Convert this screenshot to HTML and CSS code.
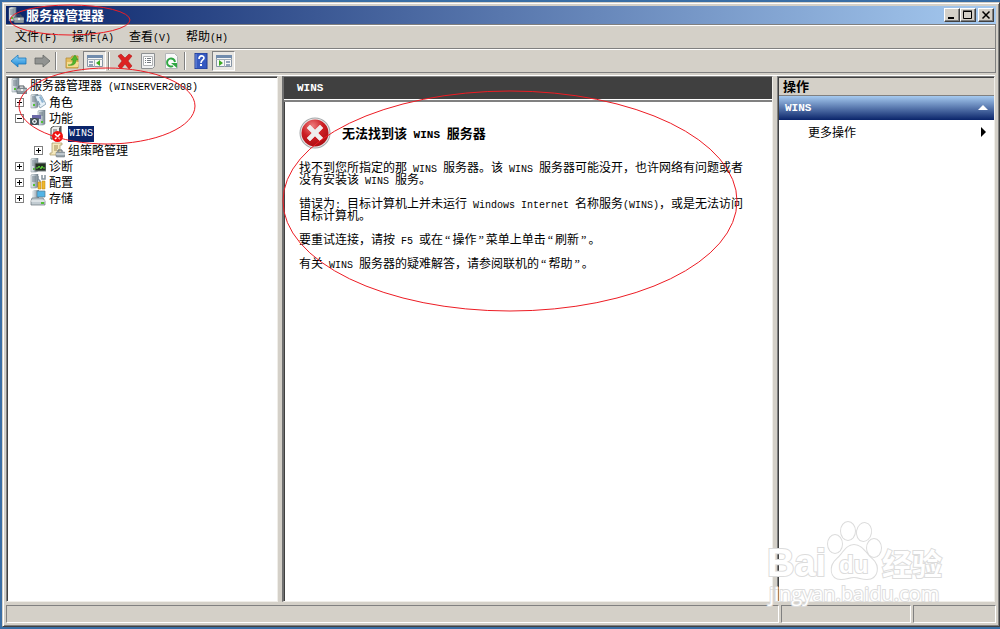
FILE: index.html
```html
<!DOCTYPE html>
<html lang="zh-CN">
<head>
  <meta charset="UTF-8">
  <meta name="viewport" content="width=device-width, initial-scale=1.0">
  <title>服务器管理器</title>
  <link rel="stylesheet" href="styles.css">
</head>
<body>
  <!-- shared icons -->
  <svg class="defs" aria-hidden="true">
    <defs>
      <linearGradient id="steel" x1="0" x2="1" y1="0" y2="0">
        <stop offset="0" stop-color="#eef2f4"/>
        <stop offset="0.5" stop-color="#b4c0c8"/>
        <stop offset="1" stop-color="#73828c"/>
      </linearGradient>
      <radialGradient id="red" cx="0.4" cy="0.25" r="0.8">
        <stop offset="0" stop-color="#ee8080"/>
        <stop offset="0.5" stop-color="#cc1f24"/>
        <stop offset="1" stop-color="#a80c12"/>
      </radialGradient>
      <linearGradient id="blue" x1="0" x2="0" y1="0" y2="1">
        <stop offset="0" stop-color="#8fd4fa"/>
        <stop offset="1" stop-color="#1784d4"/>
      </linearGradient>
      <symbol id="tower" viewBox="0 0 16 16">
        <path d="M1 1l2-1h5v13l-2 1H1z" fill="url(#steel)" stroke="#7b8890" stroke-width="0.5"/>
        <path d="M2 3h4M2 5h4M2 7h4" stroke="#5f6e78" stroke-width="0.8"/>
        <rect x="3" y="10" width="2" height="2" fill="#52c234"/>
      </symbol>
      <symbol id="server" viewBox="0 0 16 16">
        <use href="#tower" width="16" height="16"/>
        <path d="M8 10V8h5v2" fill="none" stroke="#4c555b"/>
        <rect x="6" y="10" width="10" height="6" rx="1" fill="#8e999f" stroke="#525d64" stroke-width="0.6"/>
        <path d="M6 12h10" stroke="#dce3e6" stroke-width="0.8"/>
        <rect x="10" y="11" width="2" height="2" fill="#eee"/>
      </symbol>
    </defs>
  </svg>

  <div class="window">
    <header class="titlebar">
      <svg class="icon" viewBox="0 0 16 16"><use href="#server"/></svg>
      <h1>服务器管理器</h1>
      <div class="controls">
        <button aria-label="最小化"><svg viewBox="0 0 14 12"><path d="M3 9h6" stroke="#000" stroke-width="2"/></svg></button>
        <button aria-label="最大化"><svg viewBox="0 0 14 12"><path d="M2.500 2.500h8v7h-8zM2 2h9" fill="none" stroke="#000"/></svg></button>
        <button class="close" aria-label="关闭"><svg viewBox="0 0 14 12"><path d="M3.500 2.500l7 7M10.500 2.500l-7 7" stroke="#000" stroke-width="1.500"/></svg></button>
      </div>
    </header>

    <nav class="menubar">
      <button>文件<span class="en">(F)</span></button>
      <button>操作<span class="en">(A)</span></button>
      <button>查看<span class="en">(V)</span></button>
      <button>帮助<span class="en">(H)</span></button>
    </nav>

    <div class="toolbar">
      <button aria-label="后退"><svg viewBox="0 0 16 16"><path d="M0 8l7-6v3h8v6H7v3z" fill="url(#blue)" stroke="#1976ba" stroke-width="0.8"/></svg></button>
      <button aria-label="前进"><svg viewBox="0 0 16 16"><path d="M16 8L9 2v3H1v6h8v3z" fill="#919391" stroke="#666866" stroke-width="0.8"/></svg></button>
      <span class="sep"></span>
      <button aria-label="上移一级"><svg viewBox="0 0 16 16"><path d="M2 15V5h5l1-2h6v12z" fill="#e4bd5e" stroke="#b48c35" stroke-width="0.8"/><path d="M3 14V9h12l-1 5z" fill="#f5dc91"/><path d="M4 12c4 0 5-2 5-5H7l4-5 3 5h-2c0 5-4 6-8 5z" fill="#50b52d" stroke="#348d1c" stroke-width="0.5"/></svg></button>
      <button class="pressed" aria-label="显示控制台树"><svg viewBox="0 0 18 16"><path d="M1.500 2.500h15v11h-15z" fill="#f7f7f7" stroke="#8795a5"/><path d="M1 2h16v3H1z" fill="#718cad"/><path d="M8.500 6v8M1 6.500h16" stroke="#a4aeb7"/><path d="M3 9h4M3 12h4" stroke="#7288a5" stroke-width="1.500"/><path d="M14 7v6l-4-3z" fill="#3baa22"/></svg></button>
      <span class="sep"></span>
      <button aria-label="删除"><svg viewBox="0 0 16 16"><path d="M1 3l3-2 4 4 4-4 3 2-4 5 4 5-3 3-4-5-4 5-3-3 4-5z" fill="#dd2222" stroke="#a50e0e" stroke-width="0.5"/></svg></button>
      <button aria-label="属性"><svg viewBox="0 0 16 16"><path d="M1.500 0.500h13v13l-2 2h-11z" fill="#f0f1f1" stroke="#8e9193"/><path d="M3.500 3.500h9v9h-9z" fill="#fff" stroke="#b0b2b4"/><path d="M5 5.500h1M7 5.500h4M5 7.500h1M7 7.500h4M5 9.500h1M7 9.500h4" stroke="#757b81"/></svg></button>
      <button aria-label="刷新"><svg viewBox="0 0 16 16"><path d="M2.500 0.500h9l3 3v12h-12z" fill="#fafafa" stroke="#b4b6b8"/><path d="M12 9a4 4 0 1 0-2 4" fill="none" stroke="#2fa641" stroke-width="2"/><path d="M8 10h6v5z" fill="#2fa641"/></svg></button>
      <span class="sep"></span>
      <button aria-label="帮助主题"><svg viewBox="0 0 16 16"><path d="M2 0h12v16H2z" fill="#365ac1" stroke="#213b90"/><path d="M3 1v14" stroke="#7591df"/><path d="M6 6c0-4 5-4 5-1 0 2-3 2-3 5" fill="none" stroke="#fff" stroke-width="1.600"/><rect x="7" y="11" width="2" height="2" fill="#fff"/></svg></button>
      <button class="pressed" aria-label="显示操作窗格"><svg viewBox="0 0 18 16"><path d="M1.500 2.500h15v11h-15z" fill="#f7f7f7" stroke="#8795a5"/><path d="M1 2h16v3H1z" fill="#718cad"/><path d="M9.500 6v8M1 6.500h16" stroke="#a4aeb7"/><path d="M11 9h4M11 12h4" stroke="#7288a5" stroke-width="1.500"/><path d="M4 7v6l4-3z" fill="#3baa22"/></svg></button>
    </div>

    <main class="panes">
      <!-- console tree -->
      <section class="tree" aria-label="控制台树">
        <ul>
          <li class="row root"><svg class="icon" viewBox="0 0 16 16"><use href="#server"/></svg><span class="label">服务器管理器<span class="en"> (WINSERVER2008)</span></span></li>
          <li class="row">
            <button class="toggle" aria-label="展开角色"><svg viewBox="0 0 7 7"><path d="M1 3.500h5M3.500 1v5" stroke="#000"/></svg></button>
            <svg class="icon" viewBox="0 0 16 16"><use href="#tower"/><path d="M5 2l6-1 5 9-6 4z" fill="#e6f1f8" stroke="#6d8ba0" stroke-width="0.7"/><path d="M9 3l2-1 3 6-2 1z" fill="#8fb5d2"/><path d="M8 7l2 4" stroke="#6d8ba0"/></svg>
            <span class="label">角色</span>
          </li>
          <li class="row">
            <button class="toggle" aria-label="折叠功能"><svg viewBox="0 0 7 7"><path d="M1 3.500h5" stroke="#000"/></svg></button>
            <svg class="icon" viewBox="0 0 16 16"><path d="M8 1l2-1h5v14l-2 1H8z" fill="url(#steel)" stroke="#7b8890" stroke-width="0.5"/><path d="M9 3h4M9 5h4" stroke="#5f6e78" stroke-width="0.8"/><rect x="11" y="11" width="2" height="2" fill="#52c234"/><path d="M2 5h9v4H2z" fill="#6c69a8"/><path d="M0 8h9v7H0z" fill="#56646d"/><circle cx="4.500" cy="11.500" r="3" fill="#dce5ea" stroke="#20272c"/><circle cx="4.500" cy="11.500" r="1" fill="#39444b"/></svg>
            <span class="label">功能</span>
          </li>
          <li class="row child leaf">
            <svg class="icon" viewBox="0 0 16 16"><path d="M2 2l3-2h7v13H2z" fill="#eee" stroke="#444"/><path d="M10 2l2-2v13h-2z" fill="#555"/><path d="M4 4h4M4 6h4" stroke="#666"/><circle cx="8.500" cy="10.500" r="5.500" fill="#f01010"/><path d="M6 8l5 5M11 8l-5 5" stroke="#fff" stroke-width="1.600"/></svg>
            <span class="label selected en">WINS</span>
          </li>
          <li class="row child">
            <button class="toggle" aria-label="展开组策略管理"><svg viewBox="0 0 7 7"><path d="M1 3.500h5M3.500 1v5" stroke="#000"/></svg></button>
            <svg class="icon" viewBox="0 0 16 16"><path d="M3 1h10v2h-2v10H1v-2h2z" fill="#f6e9bd" stroke="#a59563" stroke-width="0.7"/><path d="M5 4h4M5 6h4M5 8h3" stroke="#a08b55"/><path d="M9 10V8h4v2" fill="none" stroke="#59636a"/><rect x="7" y="10" width="9" height="5" rx="1" fill="#98a4ab" stroke="#606b72" stroke-width="0.5"/><path d="M7 12h9" stroke="#e6ecef"/></svg>
            <span class="label">组策略管理</span>
          </li>
          <li class="row">
            <button class="toggle" aria-label="展开诊断"><svg viewBox="0 0 7 7"><path d="M1 3.500h5M3.500 1v5" stroke="#000"/></svg></button>
            <svg class="icon" viewBox="0 0 16 16"><use href="#tower"/><rect x="5" y="5" width="11" height="8" fill="#243024" stroke="#7d8588"/><path d="M6 10h2l1-2 2 3 1-3 1 2h2" fill="none" stroke="#5ed638"/></svg>
            <span class="label">诊断</span>
          </li>
          <li class="row">
            <button class="toggle" aria-label="展开配置"><svg viewBox="0 0 7 7"><path d="M1 3.500h5M3.500 1v5" stroke="#000"/></svg></button>
            <svg class="icon" viewBox="0 0 16 16"><use href="#tower"/><path d="M8 2v3l2 2v8M12 1v4h3V1" fill="none" stroke="#84929c" stroke-width="1.500"/><path d="M8 8h3v7H8zM12 7h3v8h-3z" fill="#f0b82c" stroke="#b9820e" stroke-width="0.5"/></svg>
            <span class="label">配置</span>
          </li>
          <li class="row">
            <button class="toggle" aria-label="展开存储"><svg viewBox="0 0 7 7"><path d="M1 3.500h5M3.500 1v5" stroke="#000"/></svg></button>
            <svg class="icon" viewBox="0 0 16 16"><path d="M2 1l2-1h5v9H2z" fill="url(#steel)"/><path d="M7 1h8v6H7z" fill="#52b4e6" stroke="#59788b" stroke-width="0.7"/><path d="M2 8h11l2 3v4H1v-4z" fill="#c2ccd2" stroke="#67747c" stroke-width="0.7"/><path d="M1 11h14" stroke="#f6f8f9"/><rect x="11" y="12" width="3" height="2" fill="#52c234"/></svg>
            <span class="label">存储</span>
          </li>
        </ul>
      </section>

      <!-- result pane -->
      <section class="result">
        <h2 class="result-title en">WINS</h2>
        <div class="message">
          <div class="message-head">
            <svg viewBox="0 0 32 32"><circle cx="16" cy="16" r="15.500" fill="#a5a8aa"/><circle cx="16" cy="16" r="14.500" fill="#e8e9e9"/><circle cx="16" cy="16" r="13.500" fill="url(#red)"/><path d="M8 11l3-3 5 5 5-5 3 3-5 5 5 5-3 3-5-5-5 5-3-3 5-5z" fill="#eee" stroke="#fff" stroke-width="0.5"/></svg>
            <h3>无法找到该<span class="en"> WINS </span>服务器</h3>
          </div>
          <p>找不到您所指定的那<span class="en"> WINS </span>服务器。该<span class="en"> WINS </span>服务器可能没开，也许网络有问题或者<br>没有安装该<span class="en"> WINS </span>服务。</p>
          <p>错误为<span class="en">: </span>目标计算机上并未运行<span class="en"> Windows Internet </span>名称服务<span class="en">(WINS)</span>，或是无法访问<br>目标计算机。</p>
          <p>要重试连接，请按<span class="en"> F5 </span>或在<span class="quote">“</span>操作<span class="quote">”</span>菜单上单击<span class="quote">“</span>刷新<span class="quote">”</span>。</p>
          <p>有关<span class="en"> WINS </span>服务器的疑难解答，请参阅联机的<span class="quote">“</span>帮助<span class="quote">”</span>。</p>
        </div>
      </section>

      <!-- actions pane -->
      <aside class="actions">
        <h2 class="actions-title">操作</h2>
        <button class="group"><span class="en">WINS</span><svg viewBox="0 0 10 6"><path d="M5 0l5 5H0z" fill="#fff"/></svg></button>
        <button class="more"><span>更多操作</span><svg viewBox="0 0 6 10"><path d="M0 0l5 5-5 5z" fill="#000"/></svg></button>
      </aside>
    </main>

    <footer class="statusbar">
      <span class="cell wide"></span>
      <span class="cell mid"></span>
      <span class="cell end"></span>
    </footer>
  </div>

  <!-- red pen marks -->
  <svg class="marks" aria-hidden="true">
    <ellipse cx="70" cy="20" rx="60" ry="15"/>
    <ellipse cx="107" cy="106" rx="88" ry="38"/>
    <ellipse cx="510" cy="201" rx="227" ry="110"/>
  </svg>

  <svg class="watermark" viewBox="0 0 184 90" aria-hidden="true">
    <text class="logo" x="1" y="57">Bai</text>
    <ellipse cx="69" cy="25" rx="7" ry="9"/>
    <ellipse cx="82" cy="12" rx="7" ry="9"/>
    <ellipse cx="98" cy="13" rx="7" ry="9" transform="rotate(10 98 13)"/>
    <ellipse cx="108" cy="29" rx="7" ry="9"/>
    <path d="M88 26c8 0 12 9 18 14 8 7 6 20-5 20-5 0-9-2-13-2s-8 2-13 2c-11 0-12-13-4-20 6-5 9-14 17-14z"/>
    <text class="du" x="73" y="54">du</text>
    <text class="jy" x="116" y="56">经验</text>
    <text class="url" x="3" y="82">jingyan.baidu.com</text>
  </svg>
</body>
</html>
```

FILE: styles.css
```css
* {
  box-sizing: border-box;
}

body {
  position: relative;
  display: flex;
  margin: 0;
  min-height: 100vh;
  padding: 2px 0 2px 2px;
  background: #3a6ea5;
  color: #000;
  font: 12px/12px "Noto Sans CJK SC", sans-serif;
  overflow: hidden;
}

h1, h2, h3, p, ul {
  margin: 0;
  padding: 0;
}

button {
  padding: 0;
  border: 0;
  background: none;
  color: inherit;
  font: inherit;
}

svg {
  display: block;
}

.defs {
  position: absolute;
  width: 0;
  height: 0;
}

/* Latin text, half the width of a Chinese character */
.en {
  font-family: "Liberation Mono", monospace;
  font-size: 10px;
  white-space: pre;
}

.quote {
  font-family: "Liberation Serif", serif;
  padding: 0 2px;
}

/* keep the mixed fonts from stretching the line box */
.message .en,
.message .quote {
  line-height: 0;
}

.window {
  flex: 1;
  display: flex;
  flex-direction: column;
  min-width: 0;
  padding: 3px;
  background: #d4d0c8;
  border: 1px solid;
  border-color: #d4d0c8 #404040 #404040 #d4d0c8;
  box-shadow: inset 1px 1px #fff, inset -1px -1px #808080;
}

.icon {
  flex: none;
  width: 16px;
  height: 16px;
}

/* Title bar */
.titlebar {
  display: flex;
  align-items: center;
  height: 18px;
  padding: 0 2px;
  background: linear-gradient(to right, #0a246a, #a6caf0);
  color: #fff;
}

.titlebar h1 {
  flex: 1;
  padding-left: 2px;
  font-size: 13px;
  line-height: 18px;
}

.controls {
  display: flex;
}

.controls button {
  width: 16px;
  height: 14px;
  background: #d4d0c8;
  border: 1px solid;
  border-color: #fff #404040 #404040 #fff;
  box-shadow: inset -1px -1px #808080;
}

.controls .close {
  margin-left: 2px;
}

/* Menu and toolbar */
.menubar,
.toolbar {
  display: flex;
  align-items: center;
  height: 24px;
  border-top: 1px solid #808080;
  border-right: 1px solid #808080;
  box-shadow: inset 0 1px #fff;
}

.menubar {
  gap: 15px;
  padding: 2px 9px 0;
}

.toolbar {
  height: 25px;
  padding: 0 1px;
  border-bottom: 1px solid #808080;
}

.toolbar button {
  display: grid;
  place-items: center;
  width: 23px;
  height: 20px;
}

.toolbar svg {
  width: 18px;
  height: 16px;
}

.toolbar .pressed {
  border: 1px solid;
  border-color: #808080 #fff #fff #808080;
  background: #e9e7e3;
}

.sep {
  width: 2px;
  height: 18px;
  margin: 0 3px 0 2px;
  border-left: 1px solid #808080;
  border-right: 1px solid #fff;
}

/* Panes */
.panes {
  flex: 1;
  display: flex;
  gap: 4px;
  margin: 3px 1px 3px 0;
  box-shadow: 0 -1px #fff;
}

.tree,
.result,
.actions {
  background: #fff;
  border: 1px solid;
  border-color: #808080 #f0eee9 #f0eee9 #808080;
  box-shadow: inset 1px 1px #404040;
}

.tree {
  flex: none;
  width: 272px;
  padding: 1px 4px;
}

.tree ul {
  list-style: none;
}

.row {
  display: flex;
  align-items: center;
  height: 16px;
  padding-left: 4px;
}

.root {
  padding-left: 0;
}

.child {
  padding-left: 23px;
}

.leaf {
  padding-left: 38px;
}

.toggle {
  width: 9px;
  height: 9px;
  margin-right: 6px;
  border: 1px solid #808080;
}

.label {
  padding: 0 3px;
  line-height: 16px;
}

.selected {
  margin-left: 3px;
  padding: 0 1px;
  background: #0a246a;
  color: #fff;
}

.result {
  flex: 1;
  min-width: 0;
  border-left: 2px solid #707070;
}

.result-title {
  height: 23px;
  padding-left: 13px;
  background: #404040;
  color: #fff;
  font-size: 11px;
  line-height: 23px;
}

.message {
  padding: 15px;
  border-top: 2px solid #808080;
  box-shadow: 0 -1px #fff;
}

.message-head {
  display: flex;
  align-items: center;
  gap: 11px;
  margin-bottom: 12px;
}

.message-head svg {
  width: 32px;
  height: 32px;
}

.message-head h3 {
  font-size: 13px;
}

.message-head .en {
  font-size: 11px;
}

.message p {
  margin-bottom: 12px;
  white-space: nowrap;
}

/* Actions */
.actions {
  flex: none;
  width: 218px;
  padding: 1px 0 0 1px;
}

.actions-title {
  height: 18px;
  padding-left: 4px;
  background: #d4d0c8;
  border-bottom: 1px solid #808080;
  font-size: 13px;
  line-height: 16px;
}

.group,
.more {
  display: flex;
  align-items: center;
  justify-content: space-between;
  width: 100%;
  height: 24px;
  padding: 0 6px;
}

.group {
  background: linear-gradient(#a6caf0, #0a246a);
  color: #fff;
  font-weight: bold;
}

.group .en {
  font-size: 11px;
}

.group svg {
  width: 10px;
  height: 6px;
}

.more {
  padding: 0 7px 0 29px;
}

.more svg {
  width: 6px;
  height: 10px;
}

/* Status bar */
.statusbar {
  display: flex;
  gap: 2px;
  height: 18px;
}

.cell {
  border: 1px solid;
  border-color: #808080 #fff #fff #808080;
}

.wide {
  flex: 1;
}

.mid {
  width: 130px;
}

.end {
  width: 83px;
}

/* Overlays */
.marks {
  position: absolute;
  top: 0;
  left: 0;
  width: 100%;
  height: 100%;
  pointer-events: none;
}

.marks ellipse {
  fill: none;
  stroke: #ed1c24;
}

.watermark {
  position: absolute;
  right: 50px;
  bottom: 20px;
  width: 184px;
  height: 90px;
  fill: #fff;
  stroke: #dcdcdc;
  stroke-width: 2px;
  paint-order: stroke;
  pointer-events: none;
}

.watermark text {
  font-family: "Liberation Sans", "Noto Sans CJK SC", sans-serif;
  font-weight: bold;
}

.watermark .logo {
  font-size: 38px;
}

.watermark .du {
  font-size: 24px;
}

.watermark .jy {
  font-size: 30px;
}

.watermark .url {
  font-family: "Open Sans", sans-serif;
  font-size: 20px;
  font-weight: normal;
}
```
